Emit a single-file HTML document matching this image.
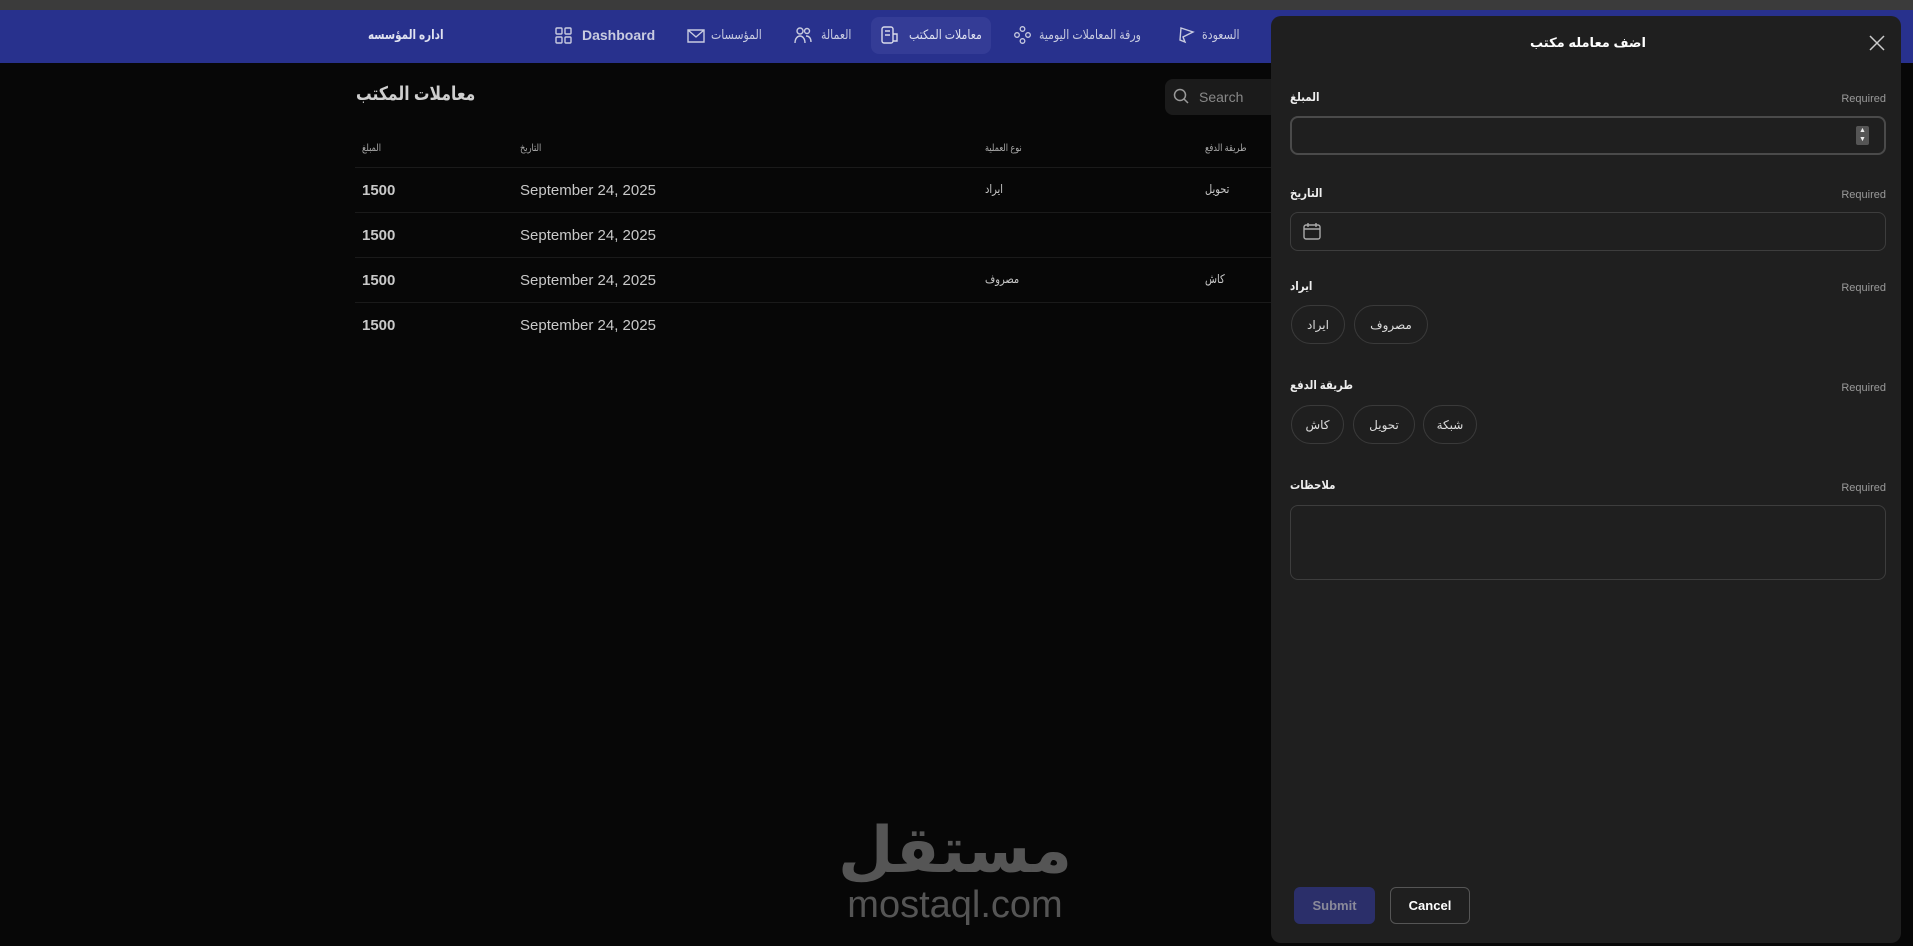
<!DOCTYPE html>
<html><head><meta charset="utf-8"><style>
*{box-sizing:border-box;margin:0;padding:0}
body{width:1913px;height:946px;background:#070707;font-family:"Liberation Sans","DejaVu Sans",sans-serif;position:relative;overflow:hidden;color:#ccc}
.a{position:absolute;white-space:nowrap}
.sx{transform:scaleX(0.82);transform-origin:left center}
.strip{left:0;top:0;width:1913px;height:10px;background:#3b3b3b}
.nav{left:0;top:10px;width:1913px;height:53px;background:#28318d}
.nt{font-size:13px;color:#c8cbe0;top:27px;transform:scaleX(0.84);transform-origin:left center}
.th{font-size:10px;color:#aaa;top:143px}
.row{font-size:15px;color:#c9c9c9}
.sep{left:355px;width:930px;height:1px;background:#1a1a1a}
.modal{left:1271px;top:16px;width:630px;height:927px;background:#1f1f1f;border-radius:10px}
.lbl{font-size:12px;font-weight:bold;color:#eee;transform:scaleX(0.85);transform-origin:left center}
.req{font-size:11px;color:#9a9a9a;right:15px}
.inp{left:19px;width:596px;border:1px solid #3d3d3d;border-radius:8px}
.pill{border:1px solid #3a3a3a;border-radius:24px;height:39px;font-size:12px;color:#ddd;display:flex;align-items:center;justify-content:center}
</style></head><body>
<div class="a strip"></div>
<div class="a nav"></div>
<div class="a" style="left:368px;top:27px;font-size:13px;font-weight:bold;color:#e0e2f0;transform:scaleX(0.8);transform-origin:left center">اداره المؤسسه</div>
<svg class="a" style="left:555px;top:27px" width="17" height="17" fill="none" stroke="#c8cbe0" stroke-width="1.4"><rect x="1" y="1" width="6" height="6" rx="1"/><rect x="10" y="1" width="6" height="6" rx="1"/><rect x="1" y="10" width="6" height="6" rx="1"/><rect x="10" y="10" width="6" height="6" rx="1"/></svg>
<div class="a" style="left:582px;top:27px;font-size:14px;font-weight:bold;color:#c8cbe0">Dashboard</div>
<svg class="a" style="left:687px;top:27px" width="18" height="17" fill="none" stroke="#c8cbe0" stroke-width="1.4"><path d="M1 3h16v12H1z M1 3l8 7 8-7"/></svg>
<div class="a nt" style="left:711px">المؤسسات</div>
<svg class="a" style="left:794px;top:26px" width="18" height="18" fill="none" stroke="#c8cbe0" stroke-width="1.4"><circle cx="6" cy="5" r="3"/><circle cx="13" cy="5" r="2.5"/><path d="M1 17c0-5 3-7 5-7s5 2 5 7M12 10c3 0 5 2 5 6"/></svg>
<div class="a nt" style="left:821px">العمالة</div>
<div class="a" style="left:871px;top:17px;width:120px;height:37px;border-radius:8px;background:#343c96"></div>
<svg class="a" style="left:881px;top:26px" width="17" height="18" fill="none" stroke="#d8daea" stroke-width="1.4"><rect x="1" y="1" width="11" height="16" rx="2"/><path d="M4 5h5M4 9h5M12 8h4v7h-4"/></svg>
<div class="a nt" style="left:909px;color:#dde0f0">معاملات المكتب</div>
<svg class="a" style="left:1014px;top:26px" width="17" height="18" fill="none" stroke="#c8cbe0" stroke-width="1.3"><circle cx="8.5" cy="3" r="2.3"/><circle cx="3" cy="9" r="2.3"/><circle cx="14" cy="9" r="2.3"/><circle cx="8.5" cy="15" r="2.3"/></svg>
<div class="a nt" style="left:1039px">ورقة المعاملات اليومية</div>
<svg class="a" style="left:1177px;top:26px" width="18" height="18" fill="none" stroke="#c8cbe0" stroke-width="1.4"><path d="M4 2l12 4-10 5 2 5-5-2 1-12z"/></svg>
<div class="a nt" style="left:1202px">السعودة</div>

<div class="a sx" style="left:356px;top:83px;font-size:19px;font-weight:bold;color:#cfcfcf">معاملات المكتب</div>
<div class="a" style="left:1165px;top:79px;width:120px;height:36px;background:#1b1b1b;border-radius:8px"></div>
<svg class="a" style="left:1173px;top:88px" width="16" height="16" fill="none" stroke="#999" stroke-width="1.5"><circle cx="7" cy="7" r="5.5"/><path d="M11 11l4 4"/></svg>
<div class="a" style="left:1199px;top:89px;font-size:14px;color:#888">Search</div>
<div class="a th sx" style="left:362px">المبلغ</div>
<div class="a th sx" style="left:520px">التاريخ</div>
<div class="a th sx" style="left:985px">نوع العملية</div>
<div class="a th sx" style="left:1205px">طريقة الدفع</div>
<div class="a sep" style="top:167px"></div>
<div class="a sep" style="top:212px"></div>
<div class="a sep" style="top:257px"></div>
<div class="a sep" style="top:302px"></div>
<div class="a row" style="left:362px;top:182px;font-weight:bold">1500</div><div class="a row" style="left:520px;top:182px">September 24, 2025</div><div class="a row sx" style="left:985px;top:182px;font-size:12px">ايراد</div><div class="a row sx" style="left:1205px;top:182px;font-size:12px">تحويل</div>
<div class="a row" style="left:362px;top:227px;font-weight:bold">1500</div><div class="a row" style="left:520px;top:227px">September 24, 2025</div>
<div class="a row" style="left:362px;top:272px;font-weight:bold">1500</div><div class="a row" style="left:520px;top:272px">September 24, 2025</div><div class="a row sx" style="left:985px;top:272px;font-size:12px">مصروف</div><div class="a row sx" style="left:1205px;top:272px;font-size:12px">كاش</div>
<div class="a row" style="left:362px;top:317px;font-weight:bold">1500</div><div class="a row" style="left:520px;top:317px">September 24, 2025</div>

<div class="a" style="left:820px;top:812px;width:270px;text-align:center;font-size:64px;font-weight:bold;color:#555;line-height:76px">مستقل</div>
<div class="a" style="left:800px;top:884px;width:310px;text-align:center;font-size:38px;color:#555">mostaql.com</div>

<div class="a modal">
<div class="a" style="left:0;width:634px;text-align:center;top:19px;font-size:13px;font-weight:bold;color:#fff">اضف معامله مكتب</div>
<svg class="a" style="left:598px;top:19px" width="16" height="16" stroke="#ccc" stroke-width="1.5"><path d="M1 1l14 14M15 1L1 15"/></svg>
<div class="a lbl" style="left:19px;top:74px">المبلغ</div><div class="a req" style="top:77px">Required</div>
<div class="a inp" style="top:100px;height:39px;border:2px solid #4a4a4a"></div>
<div class="a" style="left:585px;top:110px;width:13px;height:19px;background:#555;border-radius:2px;font-size:7px;color:#eee;text-align:center;line-height:9px">▲<br>▼</div>
<div class="a lbl" style="left:19px;top:170px">التاريخ</div><div class="a req" style="top:173px">Required</div>
<div class="a inp" style="top:196px;height:39px"></div>
<svg class="a" style="left:32px;top:206px" width="18" height="18" fill="none" stroke="#aaa" stroke-width="1.4"><rect x="1" y="3" width="16" height="14" rx="2"/><path d="M1 7h16M5 1v4M13 1v4"/></svg>
<div class="a lbl" style="left:19px;top:263px">ايراد</div><div class="a req" style="top:266px">Required</div>
<div class="a pill" style="left:20px;top:289px;width:54px">ايراد</div>
<div class="a pill" style="left:83px;top:289px;width:74px">مصروف</div>
<div class="a lbl" style="left:19px;top:362px">طريقة الدفع</div><div class="a req" style="top:366px">Required</div>
<div class="a pill" style="left:20px;top:389px;width:53px">كاش</div>
<div class="a pill" style="left:82px;top:389px;width:62px">تحويل</div>
<div class="a pill" style="left:152px;top:389px;width:54px">شبكة</div>
<div class="a lbl" style="left:19px;top:462px">ملاحظات</div><div class="a req" style="top:466px">Required</div>
<div class="a inp" style="top:489px;height:75px"></div>
<div class="a" style="left:23px;top:871px;width:81px;height:37px;background:#2b2f6a;border-radius:6px;font-size:13px;font-weight:bold;color:#8a8a9a;text-align:center;line-height:37px">Submit</div>
<div class="a" style="left:119px;top:871px;width:80px;height:37px;border:1px solid #555;border-radius:6px;font-size:13px;font-weight:bold;color:#fff;text-align:center;line-height:35px">Cancel</div>
</div>
</body></html>
